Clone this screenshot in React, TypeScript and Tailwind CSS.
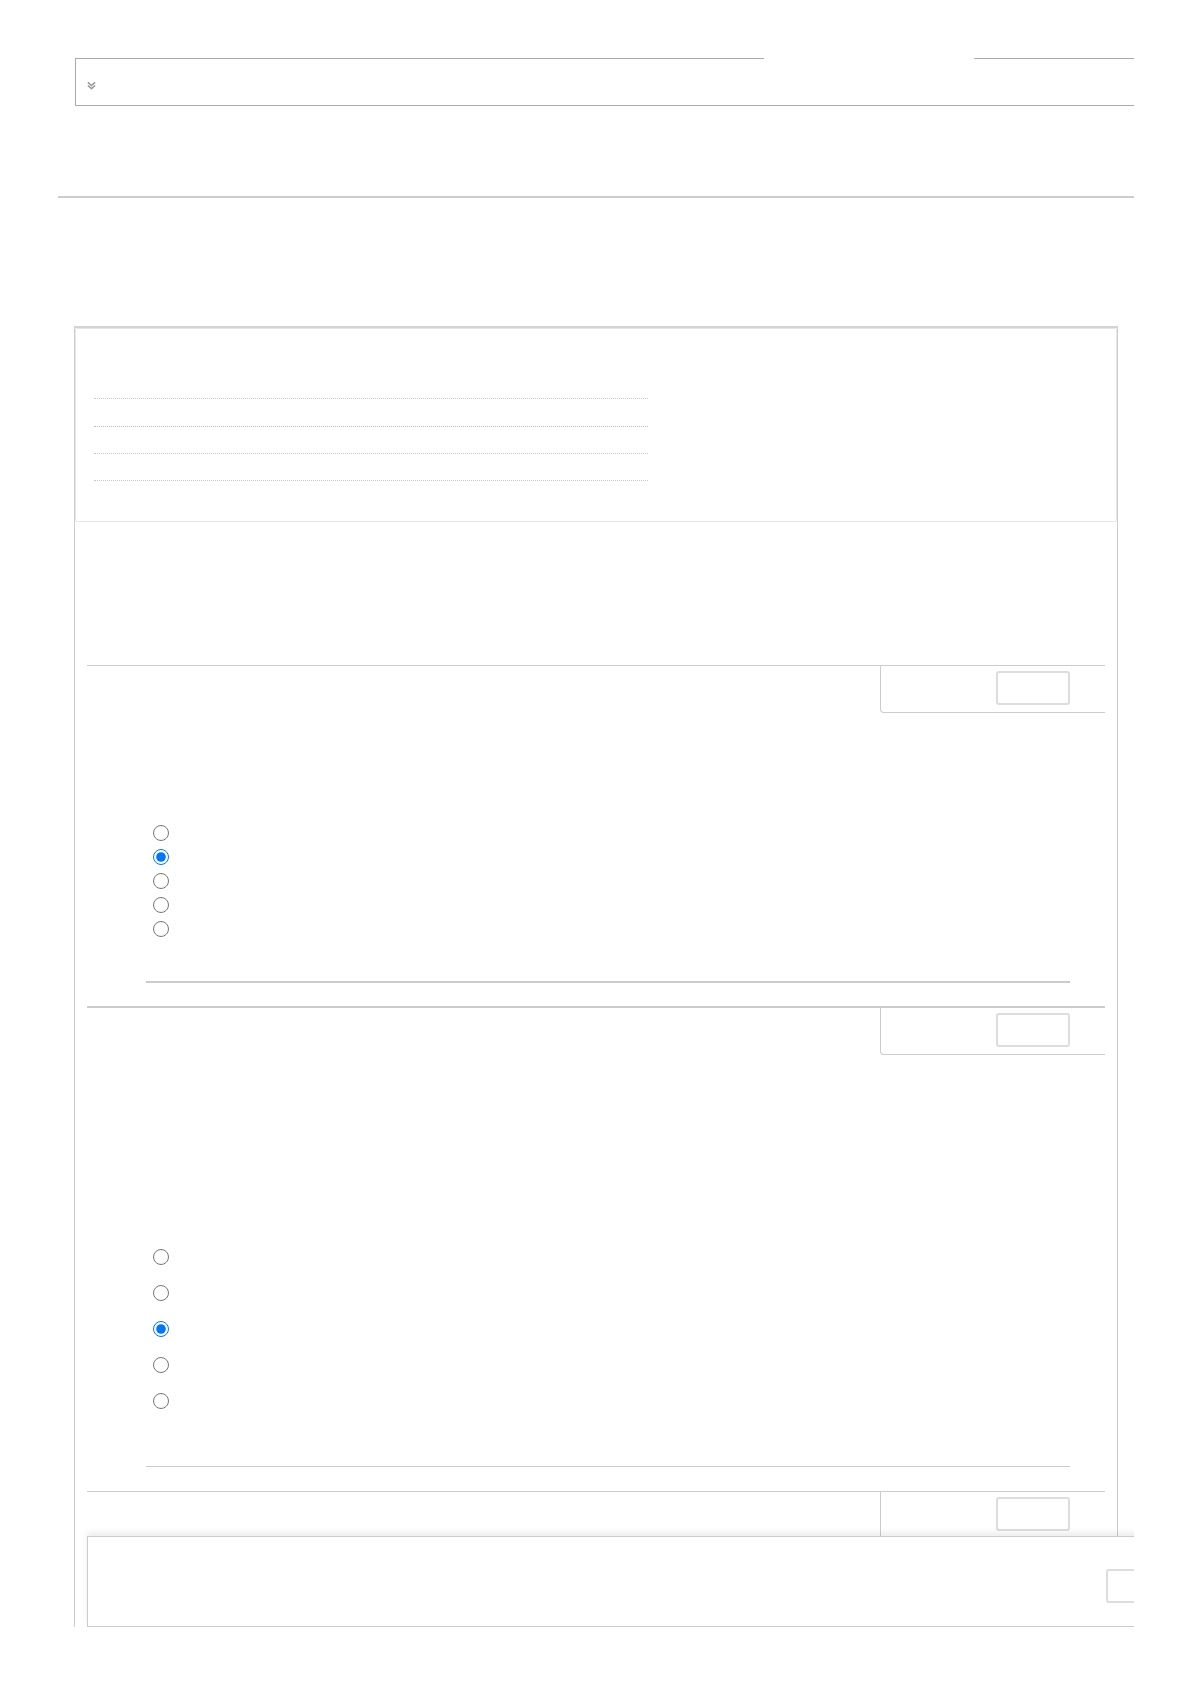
import React from "react";

function Chevrons() {
  return (
    <svg viewBox="0 0 10 10" className="h-[9px] w-[9px]" fill="none" stroke="#9a9a9a" strokeWidth="1.8" aria-hidden>
      <path d="M1 1.5L5 5l4-3.5" />
      <path d="M1 5l4 3.5L9 5" />
    </svg>
  );
}

function SideBox({ tall = true }: { tall?: boolean }) {
  return (
    <div className="flex justify-end">
      <div
        className={
          tall
            ? "h-[47px] w-[225px] rounded-bl-[4px] border-b border-l border-[#cccccc] pt-[5px]"
            : "h-[47px] w-[225px] border-l border-[#cccccc] pt-[5px]"
        }
      >
        <div className="ml-[115px] h-[34px] w-[74px] rounded-[3px] border-2 border-[#dddddd]" />
      </div>
    </div>
  );
}

function RadioGroup({ name, count, checked, gap }: { name: string; count: number; checked: number; gap: string }) {
  return (
    <div className={`flex flex-col pl-[66px] ${gap}`}>
      {Array.from({ length: count }).map((_, i) => (
        <label key={i} className="flex h-4 items-center">
          <input type="radio" name={name} defaultChecked={i === checked} className="m-0 h-4 w-4" />
        </label>
      ))}
    </div>
  );
}

export default function App() {
  return (
    <div className="min-h-[1684px] bg-white font-['Liberation_Sans',Arial,sans-serif]">
      <div className="w-[1134px] overflow-hidden pl-[58px] pt-[58px]">
        {/* collapsed toolbar */}
        <div className="relative ml-[17px] h-[48px] w-[1100px] border border-[#aaaaaa] pl-[11px] pt-[22px]">
          <span className="absolute -top-px left-[688px] h-px w-[210px] bg-white" />
          <Chevrons />
        </div>

        <div className="mt-[90px] h-[2px] w-[1076px] bg-[#cccccc]" />

        {/* main panel */}
        <div className="ml-[16px] mt-[128px] h-[1301px] w-[1044px] border-l border-r border-t-2 border-[#cccccc] border-t-[#d4d4d4]">
          <div className="h-[194px] rounded-[2px] border border-[#e6e6e6] pl-[18px]">
            <div className="mt-[69px] h-px w-[554px] border-t border-dotted border-[#c8c8c8]" />
            <div className="mt-[27px] h-px w-[554px] border-t border-dotted border-[#bdbdbd]" />
            <div className="mt-[26px] h-px w-[554px] border-t border-dotted border-[#c8c8c8]" />
            <div className="mt-[26px] h-px w-[554px] border-t border-dotted border-[#c8c8c8]" />
          </div>

          <div className="ml-[12px] w-[1018px]">
            {/* question 1 */}
            <div className="mt-[143px] border-t border-[#cccccc]">
              <SideBox />
              <div className="mt-[112px]">
                <RadioGroup name="q1" count={5} checked={1} gap="gap-2" />
              </div>
              <div className="ml-[59px] mt-[44px] h-[2px] w-[924px] bg-[#cccccc]" />
            </div>

            {/* question 2 */}
            <div className="mt-[23px] border-t-2 border-[#cccccc]">
              <SideBox />
              <div className="mt-[194px]">
                <RadioGroup name="q2" count={5} checked={2} gap="gap-5" />
              </div>
              <div className="ml-[59px] mt-[57px] h-px w-[924px] bg-[#cccccc]" />
            </div>

            {/* question 3 */}
            <div className="mt-[24px] h-[45px] overflow-hidden border-t border-[#cccccc]">
              <SideBox tall={false} />
            </div>

            {/* sticky footer bar */}
            <div className="relative h-[91px] w-[1060px] border border-[#cccccc] bg-white pt-[32px] shadow-[0_-4px_6px_rgba(0,0,0,0.07)]">
              <div className="ml-[1018px] h-[34px] w-[74px] rounded-[3px] border-2 border-[#dddddd]" />
            </div>
          </div>
        </div>
      </div>
    </div>
  );
}
